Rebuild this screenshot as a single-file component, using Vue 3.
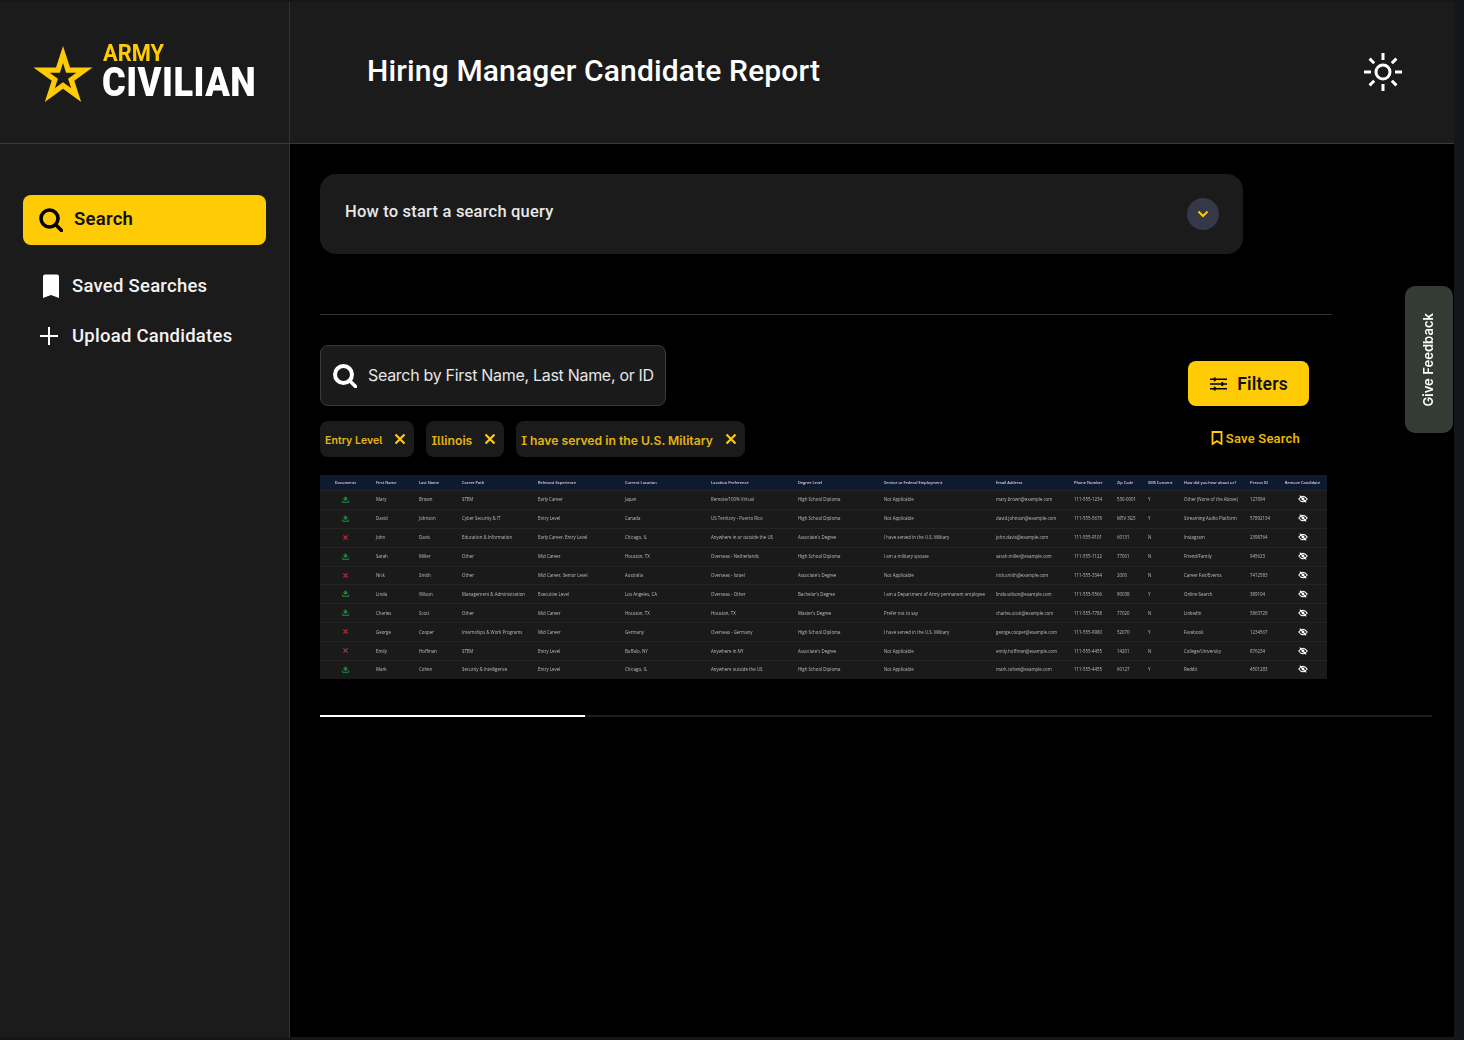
<script setup>
const columns = ['Documents','First Name','Last Name','Career Path','Relevant Experience','Current Location','Location Preference','Degree Level','Service or Federal Employment','Email Address','Phone Number','Zip Code','SMS Consent','How did you hear about us?','Person ID','Remove Candidate']
const hsd = 'High School Diploma', ad = "Associate's Degree", na = 'Not Applicable', mil = 'I have served in the U.S. Military'
const rows = [
  [1,'Mary','Brown','STEM','Early Career','Japan','Remote/100% Virtual',hsd,na,'mary.brown@example.com','111-555-1234','530-0001','Y','Other (None of the Above)','127894'],
  [1,'David','Johnson','Cyber Security & IT','Entry Level','Canada','US Territory - Puerto Rico',hsd,na,'david.johnson@example.com','111-555-5678','M5V 3G5','Y','Streaming Audio Platform','57892134'],
  [0,'John','Davis','Education & Information','Early Career, Entry Level','Chicago, IL','Anywhere in or outside the US',ad,mil,'john.davis@example.com','111-555-9101','60131','N','Instagram','2398764'],
  [1,'Sarah','Miller','Other','Mid Career','Houston, TX','Overseas - Netherlands',hsd,'I am a military spouse','sarah.miller@example.com','111-555-1122','77001','N','Friend/Family','945623'],
  [0,'Nick','Smith','Other','Mid Career, Senior Level','Australia','Overseas - Israel',ad,na,'nick.smith@example.com','111-555-3344','2000','N','Career Fair/Events','7412583'],
  [1,'Linda','Wilson','Management & Administration','Executive Level','Los Angeles, CA','Overseas - Other',"Bachelor's Degree",'I am a Department of Army permanent employee','linda.wilson@example.com','111-555-5566','90038','Y','Online Search','389104'],
  [1,'Charles','Scott','Other','Mid Career','Houston, TX','Houston, TX',"Master's Degree",'Prefer not to say','charles.scott@example.com','111-555-7788','77020','N','LinkedIn','5863729'],
  [0,'George','Cooper','Internships & Work Programs','Mid Career','Germany','Overseas - Germany',hsd,mil,'george.cooper@example.com','111-555-9980','52070','Y','Facebook','1234567'],
  [0,'Emily','Hoffman','STEM','Entry Level','Buffalo, NY','Anywhere in NY',ad,na,'emily.hoffman@example.com','111-555-4455','14201','N','College/University','876234'],
  [1,'Mark','Cohen','Security & Intelligence','Entry Level','Chicago, IL','Anywhere outside the US',hsd,na,'mark.cohen@example.com','111-555-4455','60127','Y','Reddit','4501283'],
]
const tags = ['Entry Level', 'Illinois', 'I have served in the U.S. Military']
</script>

<template>
  <div class="page">
    <div class="frame">
      <header class="top">
        <div class="brand">
          <svg class="star" viewBox="0 0 60 58" aria-hidden="true">
            <polygon fill="#ffcb05" points="30,0 37,21.4 59.5,21.4 41.3,34.7 48.2,56.1 30,42.8 11.8,56.1 18.7,34.7 0.5,21.4 23,21.4"/>
            <polygon fill="#1b1b1b" points="30,17 33.1,26.7 43.3,26.7 35.1,32.7 38.2,42.3 30,36.3 21.800,42.3 24.9,32.7 16.7,26.7 26.9,26.7"/>
          </svg>
          <div class="wordmark">
            <span class="army">ARMY</span>
            <span class="civilian">CIVILIAN</span>
          </div>
        </div>
        <div class="titlebar">
          <h1>Hiring Manager Candidate Report</h1>
          <svg class="sun" viewBox="0 0 38 38" aria-hidden="true">
            <circle cx="19" cy="19" r="7" fill="none" stroke="#fff" stroke-width="3"/>
            <g stroke="#fff" stroke-width="3">
              <path d="M19 0v7M19 31v7M0 19h7M31 19h7M5.6 5.6l4.6 4.6M27.8 27.8l4.6 4.6M5.6 32.4l4.6-4.6M27.8 10.2l4.6-4.6"/>
            </g>
          </svg>
        </div>
      </header>

      <div class="body">
        <nav class="side">
          <a class="nav active">
            <svg class="i-search" viewBox="0 0 24 24" aria-hidden="true">
              <circle cx="10.5" cy="10.5" r="8.5" fill="none" stroke="#000" stroke-width="3.6"/>
              <path d="M17 17l5.5 5.5" stroke="#000" stroke-width="3.6" stroke-linecap="round"/>
            </svg>
            Search
          </a>
          <a class="nav">
            <svg class="i-mark" viewBox="0 0 18 24" aria-hidden="true"><path fill="#fff" d="M1 2.5Q1 .5 3 .5h12q2 0 2 2V24l-8-3-8 3z"/></svg>
            Saved Searches
          </a>
          <a class="nav">
            <svg class="i-plus" viewBox="0 0 18 18" aria-hidden="true"><path d="M9 0v18M0 9h18" stroke="#fff" stroke-width="2"/></svg>
            Upload Candidates
          </a>
        </nav>

        <main class="main">
          <section class="accordion">
            <span>How to start a search query</span>
            <button class="chev" aria-label="Expand">
              <svg viewBox="0 0 12 8" aria-hidden="true"><path d="M1.5 1.5L6 6l4.5-4.5" fill="none" stroke="#ffcb05" stroke-width="2"/></svg>
            </button>
          </section>

          <hr class="rule" />

          <div class="search-row">
            <div class="searchbox">
              <svg viewBox="0 0 24 24" aria-hidden="true">
                <circle cx="10.5" cy="10.5" r="8.5" fill="none" stroke="#fff" stroke-width="4"/>
                <path d="M17 17l5.5 5.5" stroke="#fff" stroke-width="3.6" stroke-linecap="round"/>
              </svg>
              <span>Search by First Name, Last Name, or ID</span>
            </div>
            <button class="filters">
              <svg viewBox="0 0 18 14" aria-hidden="true">
                <path d="M0 2h18M0 7h18M0 12h18" stroke="#000" stroke-width="1.7"/>
                <path d="M5 0v4M13 5v4M5 10v4" stroke="#000" stroke-width="2"/>
              </svg>
              Filters
            </button>
          </div>

          <div class="tag-row">
            <div class="tags">
              <span v-for="t in tags" :key="t" class="tag">
                <span class="tag-text">{{ t }}</span>
                <svg viewBox="0 0 12 12" aria-hidden="true"><path d="M1.5 1.5l9 9M10.5 1.5l-9 9" stroke="#ffcb05" stroke-width="2.2"/></svg>
              </span>
            </div>
            <a class="save">
              <svg viewBox="0 0 12 14" aria-hidden="true"><path d="M1.5 1h9v12L6 10l-4.500 3z" fill="none" stroke="#ffcb05" stroke-width="1.8"/></svg>
              Save Search
            </a>
          </div>

          <div class="table">
            <div class="tr head">
              <div v-for="(c, i) in columns" :key="c" class="td" :class="{ mid: i === 0 || i === 15 }">{{ c }}</div>
            </div>
            <div v-for="r in rows" :key="r[14]" class="tr">
              <div class="td mid">
                <svg v-if="r[0]" class="doc" viewBox="0 0 10 10" aria-hidden="true">
                  <path d="M3.500 1h3v2.500H9L5 7 1 3.500h2.500z" fill="#1f8a3f"/>
                  <path d="M.8 6.500v2.500h8.400V6.500" fill="none" stroke="#27a04a" stroke-width="1.200"/>
                </svg>
                <svg v-else class="doc" viewBox="0 0 10 10" aria-hidden="true"><path d="M2 2l6 6M8 2L2 8" stroke="#b8333c" stroke-width="1.500"/></svg>
              </div>
              <div v-for="n in 14" :key="n" class="td">{{ r[n] }}</div>
              <div class="td mid">
                <svg class="eye" viewBox="0 0 12 10" aria-hidden="true">
                  <path d="M.7 5Q6-2 11.300 5 6 12 .7 5z" fill="none" stroke="#fff" stroke-width="1.300"/>
                  <circle cx="6" cy="5" r="1.800" fill="#fff"/>
                  <path d="M2 .8l8 8.400" stroke="#fff" stroke-width="1.300"/>
                </svg>
              </div>
            </div>
          </div>

          <div class="progress"><div class="bar"></div></div>
        </main>
      </div>
    </div>
    <aside class="feedback"><span>Give Feedback</span></aside>
  </div>
</template>

<style>
html, body { margin: 0; background: #14161b; }
</style>

<style scoped>
* { box-sizing: border-box; }
.page {
  position: relative;
  width: 1464px;
  height: 1040px;
  padding: 2px 10px 3px 0;
  background: #14161b;
  overflow: hidden;
  font-family: Roboto, "Liberation Sans", sans-serif;
  color: #fff;
}
.frame { height: 100%; display: flex; flex-direction: column; background: #000; }
.top { display: flex; height: 142px; background: #1b1b1b; border-bottom: 1px solid #3a3a3a; flex: none; }
.brand {
  width: 290px; flex: none; display: flex; align-items: flex-start; gap: 9px;
  padding: 42px 0 0 33px; border-right: 1px solid #333;
}
.star { width: 60px; height: 58px; margin-top: 2px; flex: none; }
.wordmark { display: flex; flex-direction: column; }
.army, .civilian { display: block; font-weight: 700; white-space: nowrap; transform-origin: left top; }
.army { color: #ffcb05; font-size: 23px; line-height: 20px; margin-left: 1px; transform: scaleX(.95); }
.civilian { font-size: 40px; line-height: 38px; font-weight: 900; transform: scaleX(.905); letter-spacing: .5px; }
.titlebar { flex: 1; display: flex; align-items: center; justify-content: space-between; padding: 0 52px 1px 77px; }
h1 { margin: 0; font-size: 30px; line-height: 36px; font-weight: 500; letter-spacing: .15px; position: relative; top: -1px; }
.sun { width: 38px; height: 38px; flex: none; }

.body { flex: 1; display: flex; min-height: 0; }
.side { width: 290px; flex: none; background: #1b1b1b; border-right: 1px solid #333; padding: 51px 23px 0; }
.nav {
  display: flex; align-items: center; height: 50px; width: 243px; font-size: 18.500px; font-weight: 500;
  letter-spacing: .25px; color: #f2f2f2; padding-left: 16px; gap: 12px; margin-top: 1px;
}
.nav.active { background: #ffcb05; color: #111; border-radius: 8px; font-weight: 600; height: 50px; margin: 0 0 16px; gap: 11px; padding-bottom: 3px; }
.nav.active svg { margin-top: 3px; }
.i-search { width: 24px; height: 24px; }
.i-mark { width: 18px; height: 24px; margin-left: 3px; }
.i-plus { width: 18px; height: 18px; margin-left: 1px; margin-right: 5px; }
.nav:nth-child(3) { gap: 9px; margin-top: 0; }

.main { flex: 1; padding: 30px 22px 0 30px; min-width: 0; }
.accordion {
  width: 923px; height: 80px; background: #1b1b1b; border-radius: 16px; padding: 0 24px 6px 25px;
  display: flex; align-items: center; justify-content: space-between;
  font-size: 16.500px; font-weight: 500; letter-spacing: .2px; color: #e8e8e8;
}
.chev {
  width: 32px; height: 32px; border: 0; border-radius: 50%; background: #353947; padding: 0;
  display: flex; align-items: center; justify-content: center; position: relative; top: 3px;
}
.chev svg { width: 12px; height: 8px; }
.rule { border: 0; border-top: 1px solid #333; margin: 60px 0 30px; width: 1012px; }

.search-row { display: flex; justify-content: space-between; align-items: flex-end; width: 989px; }
.searchbox {
  width: 346px; height: 61px; background: #1a1a1a; border: 1px solid #3a3a3a; border-radius: 8px;
  display: flex; align-items: center; gap: 11px; padding: 0 12px; font-family: Inter, sans-serif;
  font-size: 16px; letter-spacing: -.3px; color: #e6e6e6; white-space: nowrap;
}
.searchbox span { margin-bottom: 2px; }
.searchbox svg { width: 24px; height: 24px; flex: none; }
.filters {
  width: 121px; height: 45px; background: #ffcb05; color: #111; border: 0; border-radius: 8px;
  display: flex; align-items: center; justify-content: center; gap: 10px; font-family: Roboto, sans-serif;
  font-size: 17.500px; font-weight: 600; letter-spacing: .2px; padding: 0 0 0 1px;
}
.filters svg { width: 17px; height: 14px; }

.tag-row { display: flex; justify-content: space-between; align-items: center; width: 989px; margin-top: 15px; padding-right: 9px; }
.tags { display: flex; gap: 12px; }
.tag {
  display: flex; align-items: center; height: 36px; background: #1b1b1b; border-radius: 8px; padding: 0 8px 0 5px;
  gap: 12px; color: #e2b512; font-family: Inter, sans-serif; font-feature-settings: "cv08", "ss02";
  font-size: 12.200px; font-weight: 600; white-space: nowrap;
}
.tag:first-child { font-size: 10.600px; }
.tag-text { margin-top: 2px; }
.tag svg { width: 12px; height: 12px; }
.save { display: flex; align-items: center; gap: 3px; color: #e6b800; font-size: 13px; font-weight: 600; letter-spacing: .2px; padding-bottom: 2px; }
.save svg { width: 12px; height: 14px; }

.table { width: 1007px; margin-top: 18px; background: #1a1a1a; filter: blur(.35px); font-family: "Open Sans", sans-serif; font-size: 4.400px; color: #bdbdbd; }
.tr {
  display: grid;
  grid-template-columns: 51px 43px 43px 76px 87px 86px 87px 86px 112px 78px 43px 31px 36px 66px 35px 45px;
  height: 18.900px; align-items: center; border-top: 1px solid #242424;
}
.tr.head { height: 15px; background: #0f1a30; border-top: 0; color: #d6d6d6; font-weight: 600; font-size: 3.900px; }
.td { padding: 0 0 1px 5px; white-space: nowrap; }
.td.mid { padding: 0 0 1px; text-align: center; display: flex; justify-content: center; }
.doc { width: 7px; height: 7px; }
.eye { width: 10px; height: 8px; }

.progress { width: 1112px; height: 2px; margin-top: 36px; background: #1e1e1e; }
.bar { width: 265px; height: 2px; background: #fff; }

.feedback {
  position: absolute; left: 1405px; top: 286px; width: 48px; height: 147px; background: #343b35; border-radius: 10px;
  display: flex; align-items: center; justify-content: center; padding-right: 2px;
}
.feedback span { writing-mode: vertical-rl; transform: rotate(180deg); font-family: Inter, sans-serif; font-size: 13.100px; font-weight: 600; white-space: nowrap; }
</style>
